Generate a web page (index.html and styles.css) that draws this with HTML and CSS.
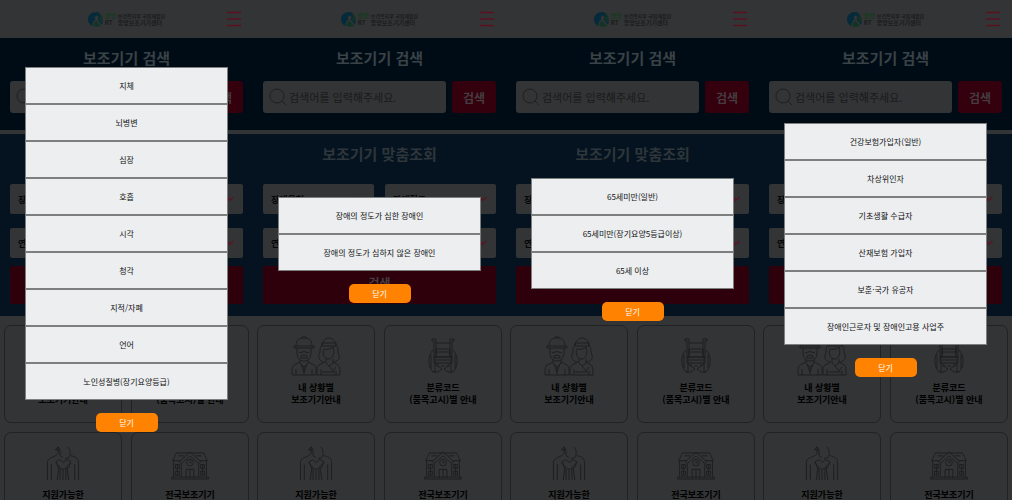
FILE: index.html
```html
<!DOCTYPE html>
<html lang="ko">
<head>
<meta charset="utf-8">
<meta name="viewport" content="width=device-width, initial-scale=1">
<title>중앙보조기기센터</title>
<link rel="stylesheet" href="styles.css">
</head>
<body>
<svg class="symbols" aria-hidden="true">
  <symbol id="mark" viewBox="0 0 14 14">
    <path d="M8 0C3 0 0 3 0 7c0 3 2 5 4 6 0-3 1-5 3-6L6 5l2-2 2 2-1 2 4 5c2-5-1-12-5-12z" fill="#052a3c"/>
    <path d="M5 13c0-3 2-4 3-5l4 5c-2 1-5 1-7 0zM9 1c4 1 5 5 4 9L10 7l1-3z" fill="#123424"/>
  </symbol>
  <symbol id="menu" viewBox="0 0 16 16"><path d="M1 1.5h14M1 8h14M1 14.5h14" stroke="#5b1020" stroke-width="1.3"/></symbol>
  <symbol id="search" viewBox="0 0 18 18"><circle cx="8" cy="8" r="7"/><path d="m13 13 4 4"/></symbol>
  <symbol id="chevron" viewBox="0 0 8 6"><path d="m1 1 2.5 3.5L7.500 1" stroke="#5a1422" stroke-width="1.3"/></symbol>
  <symbol id="people" viewBox="0 0 50 40">
    <path d="M5 10c0-6 3-8 8-8s8 2 8 8M11 2V1h4v1M3 10h20v2H3zM6 12v5c0 5 3 8 7 8s7-3 7-8v-5M8 17q5-3 10 0M10 20q3-2 6 0v2h-6zM9 24v3l4 4 4-4v-3M9 26l-6 3c-2 1-2 5-2 10h24c0-5 0-9-2-10l-6-3M13 31v8M5 33v6M21 33v6M10 28l3 8 3-8"/>
    <path d="M31 9c1-5 4-7 7-7s6 2 7 7M31 7h14v3H31zM31 9c-3 3-1 6-3 10-1 4 1 6 5 7M45 9c3 3 1 6 3 10 1 4-1 6-5 7M33 13c2 1 7 0 9-2 2 6 0 12-4 12-5 0-7-6-5-10M35 23v4l3 3 4-3v-4M34 26l-6 3c-2 1-2 5-2 10h23c0-5 0-9-2-10l-5-3M38 30l4 5 3-4M30 33v6M45 35v4M31 36h13"/>
  </symbol>
  <symbol id="wheelchair" viewBox="0 0 30 36">
    <path d="M4 1h4v18H6V3H4zM26 1h-4v18h2V3h2zM8 5h14M8 11h14v8H8zM8 14h14M6 19h18v6H6zM8 22h14M5 12c-6 6-5 17 0 22h2V18M25 12c6 6 5 17 0 22h-2V18M3 17v13M27 17v13M7 26l7 5-4 3H6M23 26l-7 5 4 3h4M10 25v4M20 25v4M13 28h4"/>
  </symbol>
  <symbol id="support" viewBox="0 0 34 36">
    <path d="M12 1v6c0 4-10 4-11 9v19M12 1 9 4h5l-2-3M14 5v5l3 2M22 1c3 3 3 8 1 11l-4 1M25 10c6 1 8 3 8 8v17M5 19v16M29 19v16M9 17l4 4-2 14M25 17l-4 4 2 14M17 24v11M10 16l4-2 3 3 4-3 4 2-2 6-6 2-5-2zM14 24v11M20 24v11"/>
  </symbol>
  <symbol id="center" viewBox="0 0 40 30">
    <path d="M2 10 6 2h28l4 8M2 10h8M30 10h8M3 10v17M37 10v17M9 11 20 1l11 10-2 2-9-8-9 8zM11 13v14M29 13v14M1 27h38v2H1zM16 28v-9h8v9M20 19v9M5 14h4v4H5zM5 21h4v4H5zM31 14h4v4h-4zM31 21h4v4h-4zM7 14v11M33 14v11M8 5h6M26 5h6"/>
    <circle cx="20" cy="12" r="3.5"/><path d="M20 10v2h2"/>
  </symbol>
</svg>

<main class="gallery">
  <section class="screen">
    <div class="page">
      <header class="topbar">
        <a class="logo" href="#"><svg class="mark"><use href="#mark"/></svg><span class="badge"><span class="green">중앙</span><span>RT</span></span><span class="name"><small>보건복지부 국립재활원</small><b>중앙보조기기센터</b></span></a>
        <button class="menu" aria-label="메뉴"><svg><use href="#menu"/></svg></button>
      </header>
      <section class="find">
        <h2>보조기기 검색</h2>
        <form class="search"><label class="field"><svg><use href="#search"/></svg><input type="text" aria-label="검색어" placeholder="검색어를 입력해주세요."></label><button type="button">검색</button></form>
      </section>
      <section class="match">
        <h2>보조기기 맞춤조회</h2>
        <form class="filters">
          <label class="pick"><select aria-label="장애유형"><option>장애유형</option></select><svg><use href="#chevron"/></svg></label>
          <label class="pick"><select aria-label="장애정도"><option>장애정도</option></select><svg><use href="#chevron"/></svg></label>
          <label class="pick"><select aria-label="연령"><option>연령</option></select><svg><use href="#chevron"/></svg></label>
          <label class="pick"><select aria-label="자격"><option>자격</option></select><svg><use href="#chevron"/></svg></label>
          <button type="button">검색</button>
        </form>
      </section>
      <nav class="cards">
        <a class="card" href="#"><svg><use href="#people"/></svg><span>내 상황별<br>보조기기안내</span></a>
        <a class="card" href="#"><svg><use href="#wheelchair"/></svg><span>분류코드<br>(품목고시)별 안내</span></a>
        <a class="card" href="#"><svg><use href="#support"/></svg><span>지원가능한</span></a>
        <a class="card" href="#"><svg><use href="#center"/></svg><span>전국보조기기</span></a>
      </nav>
    </div>
    <div class="modal" role="dialog" aria-label="장애유형">
      <div class="options"><button>지체</button><button>뇌병변</button><button>심장</button><button>호흡</button><button>시각</button><button>청각</button><button>지적/자폐</button><button>언어</button><button>노인성질병(장기요양등급)</button></div>
      <button class="close">닫기</button>
    </div>
  </section>

  <section class="screen">
    <div class="page">
      <header class="topbar">
        <a class="logo" href="#"><svg class="mark"><use href="#mark"/></svg><span class="badge"><span class="green">중앙</span><span>RT</span></span><span class="name"><small>보건복지부 국립재활원</small><b>중앙보조기기센터</b></span></a>
        <button class="menu" aria-label="메뉴"><svg><use href="#menu"/></svg></button>
      </header>
      <section class="find">
        <h2>보조기기 검색</h2>
        <form class="search"><label class="field"><svg><use href="#search"/></svg><input type="text" aria-label="검색어" placeholder="검색어를 입력해주세요."></label><button type="button">검색</button></form>
      </section>
      <section class="match">
        <h2>보조기기 맞춤조회</h2>
        <form class="filters">
          <label class="pick"><select aria-label="장애유형"><option>장애유형</option></select><svg><use href="#chevron"/></svg></label>
          <label class="pick"><select aria-label="장애정도"><option>장애정도</option></select><svg><use href="#chevron"/></svg></label>
          <label class="pick"><select aria-label="연령"><option>연령</option></select><svg><use href="#chevron"/></svg></label>
          <label class="pick"><select aria-label="자격"><option>자격</option></select><svg><use href="#chevron"/></svg></label>
          <button type="button">검색</button>
        </form>
      </section>
      <nav class="cards">
        <a class="card" href="#"><svg><use href="#people"/></svg><span>내 상황별<br>보조기기안내</span></a>
        <a class="card" href="#"><svg><use href="#wheelchair"/></svg><span>분류코드<br>(품목고시)별 안내</span></a>
        <a class="card" href="#"><svg><use href="#support"/></svg><span>지원가능한</span></a>
        <a class="card" href="#"><svg><use href="#center"/></svg><span>전국보조기기</span></a>
      </nav>
    </div>
    <div class="modal" role="dialog" aria-label="장애정도">
      <div class="options"><button>장애의 정도가 심한 장애인</button><button>장애의 정도가 심하지 않은 장애인</button></div>
      <button class="close">닫기</button>
    </div>
  </section>

  <section class="screen">
    <div class="page">
      <header class="topbar">
        <a class="logo" href="#"><svg class="mark"><use href="#mark"/></svg><span class="badge"><span class="green">중앙</span><span>RT</span></span><span class="name"><small>보건복지부 국립재활원</small><b>중앙보조기기센터</b></span></a>
        <button class="menu" aria-label="메뉴"><svg><use href="#menu"/></svg></button>
      </header>
      <section class="find">
        <h2>보조기기 검색</h2>
        <form class="search"><label class="field"><svg><use href="#search"/></svg><input type="text" aria-label="검색어" placeholder="검색어를 입력해주세요."></label><button type="button">검색</button></form>
      </section>
      <section class="match">
        <h2>보조기기 맞춤조회</h2>
        <form class="filters">
          <label class="pick"><select aria-label="장애유형"><option>장애유형</option></select><svg><use href="#chevron"/></svg></label>
          <label class="pick"><select aria-label="장애정도"><option>장애정도</option></select><svg><use href="#chevron"/></svg></label>
          <label class="pick"><select aria-label="연령"><option>연령</option></select><svg><use href="#chevron"/></svg></label>
          <label class="pick"><select aria-label="자격"><option>자격</option></select><svg><use href="#chevron"/></svg></label>
          <button type="button">검색</button>
        </form>
      </section>
      <nav class="cards">
        <a class="card" href="#"><svg><use href="#people"/></svg><span>내 상황별<br>보조기기안내</span></a>
        <a class="card" href="#"><svg><use href="#wheelchair"/></svg><span>분류코드<br>(품목고시)별 안내</span></a>
        <a class="card" href="#"><svg><use href="#support"/></svg><span>지원가능한</span></a>
        <a class="card" href="#"><svg><use href="#center"/></svg><span>전국보조기기</span></a>
      </nav>
    </div>
    <div class="modal" role="dialog" aria-label="연령">
      <div class="options"><button>65세미만(일반)</button><button>65세미만(장기요양5등급이상)</button><button>65세 이상</button></div>
      <button class="close">닫기</button>
    </div>
  </section>

  <section class="screen">
    <div class="page">
      <header class="topbar">
        <a class="logo" href="#"><svg class="mark"><use href="#mark"/></svg><span class="badge"><span class="green">중앙</span><span>RT</span></span><span class="name"><small>보건복지부 국립재활원</small><b>중앙보조기기센터</b></span></a>
        <button class="menu" aria-label="메뉴"><svg><use href="#menu"/></svg></button>
      </header>
      <section class="find">
        <h2>보조기기 검색</h2>
        <form class="search"><label class="field"><svg><use href="#search"/></svg><input type="text" aria-label="검색어" placeholder="검색어를 입력해주세요."></label><button type="button">검색</button></form>
      </section>
      <section class="match">
        <h2>보조기기 맞춤조회</h2>
        <form class="filters">
          <label class="pick"><select aria-label="장애유형"><option>장애유형</option></select><svg><use href="#chevron"/></svg></label>
          <label class="pick"><select aria-label="장애정도"><option>장애정도</option></select><svg><use href="#chevron"/></svg></label>
          <label class="pick"><select aria-label="연령"><option>연령</option></select><svg><use href="#chevron"/></svg></label>
          <label class="pick"><select aria-label="자격"><option>자격</option></select><svg><use href="#chevron"/></svg></label>
          <button type="button">검색</button>
        </form>
      </section>
      <nav class="cards">
        <a class="card" href="#"><svg><use href="#people"/></svg><span>내 상황별<br>보조기기안내</span></a>
        <a class="card" href="#"><svg><use href="#wheelchair"/></svg><span>분류코드<br>(품목고시)별 안내</span></a>
        <a class="card" href="#"><svg><use href="#support"/></svg><span>지원가능한</span></a>
        <a class="card" href="#"><svg><use href="#center"/></svg><span>전국보조기기</span></a>
      </nav>
    </div>
    <div class="modal" role="dialog" aria-label="자격">
      <div class="options"><button>건강보험가입자(일반)</button><button>차상위인자</button><button>기초생활 수급자</button><button>산재보험 가입자</button><button>보훈·국가 유공자</button><button>장애인근로자 및 장애인고용 사업주</button></div>
      <button class="close">닫기</button>
    </div>
  </section>
</main>
</body>
</html>
```
FILE: styles.css
```css
* { box-sizing: border-box; }
body {
  margin: 0;
  background: #323435;
  font-family: "Noto Sans CJK KR", sans-serif;
}
button, input, select { font-family: inherit; margin: 0; }
button { border: 0; padding: 0; }
a { color: inherit; text-decoration: none; }
svg { fill: none; stroke: #1d1f20; flex: none; }
.symbols { display: none; }

.gallery {
  display: grid;
  grid-template-columns: repeat(4, 1fr);
  height: 100vh;
  overflow: hidden;
}
.screen { position: relative; overflow: hidden; }

.topbar {
  display: grid;
  grid-template-columns: 1fr auto 1fr;
  align-items: center;
  height: 38px;
  padding: 0 11px;
}
.logo { grid-column: 2; display: flex; align-items: center; gap: 2px; color: #1b1c1d; }
.mark { width: 15px; height: 15px; stroke: none; }
.badge, .name { display: flex; flex-direction: column; font-size: 6px; line-height: 7px; }
.badge { font-weight: 700; }
.green { color: #163b20; }
.name small { font-size: 5px; font-weight: 700; }
.menu { justify-self: end; width: 16px; height: 16px; background: none; }
.menu svg { display: block; width: 16px; height: 16px; }

h2 {
  margin: 0;
  font-size: 15px;
  line-height: 20px;
  font-weight: 700;
  text-align: center;
}
.find { padding: 10px 10px 17px; background: #000c15; color: #3a4247; border-bottom: 4px solid #323435; }
.find h2 { margin-bottom: 13px; }
.search { display: grid; grid-template-columns: 1fr 44px; gap: 6px; }
.field {
  display: flex;
  align-items: center;
  gap: 2px;
  height: 32px;
  min-width: 0;
  padding: 0 6px;
  border-radius: 3px;
  background: #323435;
}
.field svg { width: 18px; height: 18px; }
.field input { flex: 1; min-width: 0; padding: 0; border: 0; background: none; font-size: 11px; outline: 0; }
.field input::placeholder { color: #191b1c; }
.search button, .filters button {
  border-radius: 3px;
  background: #34000d;
  color: #443c40;
  font-size: 12px;
  font-weight: 700;
}

.match { padding: 10px 10px 12px; background: #04131f; color: #2e363b; }
.match h2 { margin-bottom: 20px; }
.filters { display: grid; grid-template-columns: 1fr 1fr; gap: 14px 11px; padding: 0; }
.pick { display: grid; align-items: center; border-radius: 2px; background: #323435; }
.pick select, .pick svg { grid-area: 1 / 1; }
.pick select {
  width: 100%;
  height: 30px;
  padding: 0 8px;
  border: 0;
  appearance: none;
  background: none;
  color: #050607;
  font-size: 9px;
  font-weight: 700;
}
.pick svg { justify-self: end; width: 8px; height: 6px; margin-right: 9px; pointer-events: none; }
.filters button {
  grid-column: 1 / -1;
  height: 38px;
  margin-top: -6px;
  padding-bottom: 6px;
  background: #2d000b;
  border-radius: 2px;
}

.cards { display: grid; grid-template-columns: 1fr 1fr; gap: 9px; padding: 9px 4px; }
.card {
  display: flex;
  flex-direction: column;
  align-items: center;
  height: 98px;
  padding-top: 10px;
  border: 1px solid #202223;
  border-radius: 7px;
  color: #000;
  font-size: 9px;
  font-weight: 700;
  line-height: 12px;
  text-align: center;
}
.card svg { width: 50px; height: 40px; margin-bottom: 6px; }
.card:nth-child(2) svg { padding: 2px 0; }
.card:nth-child(3) svg { padding: 3px 0 2px; }
.card:nth-child(4) svg { padding: 8px 0 3px; }

.modal {
  position: absolute;
  inset: 0;
  display: flex;
  flex-direction: column;
  align-items: center;
  justify-content: center;
  gap: 13px;
  padding-bottom: 1px;
}
.options { display: flex; flex-direction: column; width: 80%; }
.options button {
  height: 37px;
  border: 1px solid #7d7f7f;
  background: #eceef0;
  color: #111;
  font-size: 8px;
}
.close {
  width: 62px;
  height: 19px;
  border-radius: 5px;
  background: #ff8200;
  color: #fff;
  font-size: 8px;
}
```
